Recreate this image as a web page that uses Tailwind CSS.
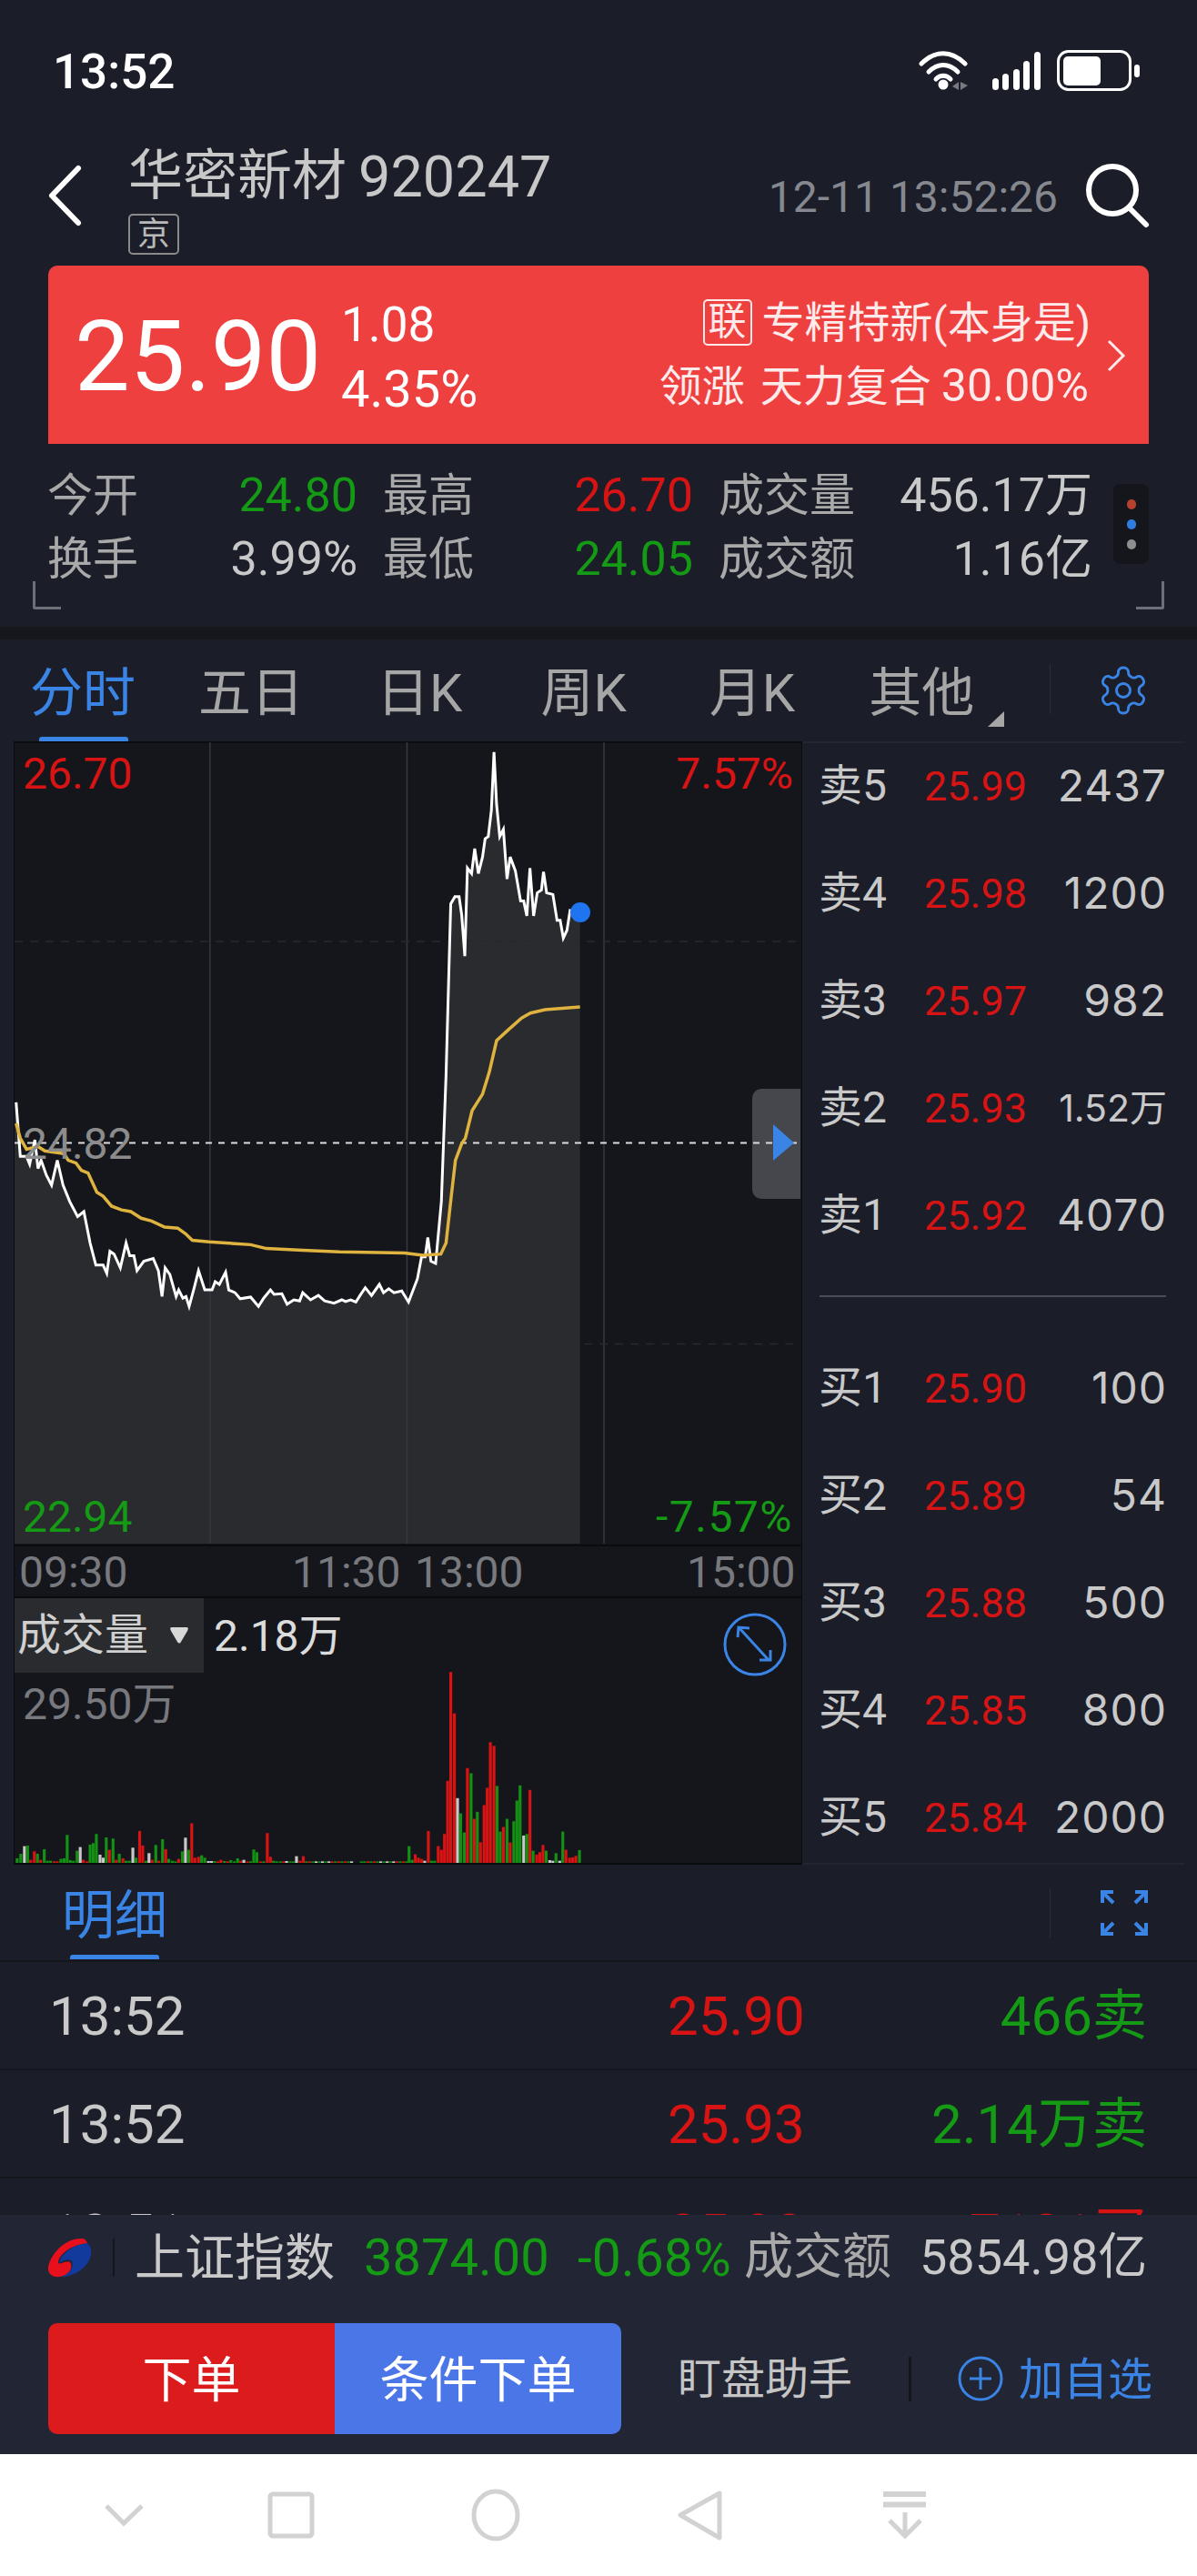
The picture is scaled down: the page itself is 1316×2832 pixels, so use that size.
<!DOCTYPE html>
<html lang="zh-CN">
<head>
  <meta charset="UTF-8" />
  <title>华密新材 920247</title>
  <script src="https://cdn.jsdelivr.net/npm/@tailwindcss/browser@4"></script>
</head>
<body class="bg-[#1b1e29] [font-family:Roboto,'Noto_Sans_CJK_SC',sans-serif]">
<div class="w-[1316px] h-[2832px] flex flex-col overflow-hidden text-[#c9c9c9]">

  <!-- status bar -->
  <div class="h-[130px] shrink-0 relative">
    <span class="absolute left-[58px] top-[49px] text-[53px] leading-[60px] font-medium text-white">13:52</span>
    <svg class="absolute left-[1005px] top-[50px]" width="250" height="56" viewBox="1005 50 250 56" fill="none">
      <path d="M1013 70 C1028 55 1046 55 1061 70" stroke="#fff" stroke-width="5" stroke-linecap="round"/>
      <path d="M1021 79 C1031 69 1043 69 1053 79" stroke="#fff" stroke-width="5" stroke-linecap="round"/>
      <path d="M1029 87 C1033 82 1041 82 1045 87" stroke="#fff" stroke-width="5" stroke-linecap="round"/>
      <circle cx="1037" cy="93" r="5.5" fill="#fff"/>
      <path d="M1054 90 L1054 99 L1047 95Z M1056 90 L1064 94 L1056 99Z" fill="#77797e"/>
      <rect x="1091" y="86" width="7" height="13" rx="3.5" fill="#fff"/>
      <rect x="1102" y="81" width="7" height="18" rx="3.5" fill="#fff"/>
      <rect x="1114" y="76" width="7" height="23" rx="3.5" fill="#fff"/>
      <rect x="1125" y="67" width="7" height="32" rx="3.5" fill="#fff"/>
      <rect x="1137" y="57" width="7" height="42" rx="3.5" fill="#fff"/>
      <rect x="1163.5" y="56.5" width="79" height="42" rx="11" stroke="#fff" stroke-width="3"/>
      <rect x="1169" y="62" width="41" height="32" rx="5" fill="#fff"/>
      <rect x="1247" y="71" width="6" height="14" rx="3" fill="#fff"/>
    </svg>
  </div>

  <!-- header -->
  <div class="h-[162px] shrink-0 relative">
    <svg class="absolute left-[50px] top-[50px]" width="42" height="70" viewBox="0 0 42 70" fill="none"><path d="M36 5 L7 35 L36 65" stroke="#fff" stroke-width="6" stroke-linecap="round" stroke-linejoin="round"/></svg>
    <div class="pl-[141px] pt-[34px]">
      <div class="flex items-center h-[60px] text-[#c8c8c8]"><span class="text-[60px] leading-none">华密新材</span><span class="ml-[13px] text-[63px] leading-none">920247</span></div>
      <div class="mt-[11px] w-[56px] h-[45px] border-2 border-[#8a8a8a] rounded-[5px] flex items-center justify-center text-[36px] leading-none text-[#b8b8b8]">京</div>
    </div>
    <span class="absolute right-[153px] top-[63px] text-[48px] leading-[48px] text-[#85888e]">12-11 13:52:26</span>
    <svg class="absolute left-[1190px] top-[46px]" width="76" height="76" viewBox="0 0 76 76" fill="none"><circle cx="33" cy="33" r="26" stroke="#fff" stroke-width="6"/><path d="M52 53 L70 71" stroke="#fff" stroke-width="6" stroke-linecap="round"/></svg>
  </div>

  <!-- price card -->
  <div class="mx-[53px] h-[196px] shrink-0 bg-[#ef4040] rounded-t-[10px] relative text-white">
    <span class="absolute left-[29px] top-[46px] text-[108px] leading-[108px]">25.90</span>
    <span class="absolute left-[322px] top-[39px] text-[53px] leading-[53px]">1.08</span>
    <span class="absolute left-[322px] top-[108px] text-[56px] leading-[56px]">4.35%</span>
    <div class="absolute right-[64px] top-[36px] flex items-center h-[52px] text-[#fdeaea]">
      <span class="w-[54px] h-[51px] border-2 border-[#fdeaea] rounded-[5px] flex items-center justify-center text-[42px] leading-none">联</span>
      <span class="ml-[11px] text-[47px] leading-none">专精特新(本身是)</span>
    </div>
    <div class="absolute right-[66px] top-[107px] flex items-center h-[50px] text-[#fdeaea] text-[47px] leading-none">
      <span>领涨</span><span class="ml-[17px]">天力复合</span><span class="ml-[11px] text-[50px]">30.00%</span>
    </div>
    <svg class="absolute left-[1163px] top-[80px]" width="24" height="38" viewBox="0 0 24 38" fill="none"><path d="M3 3 L19 19 L3 35" stroke="#fdeaea" stroke-width="3"/></svg>
  </div>

  <!-- quote stats -->
  <div class="h-[201px] shrink-0 relative pt-[22px] pl-[52px]">
    <div class="flex h-[70px] items-center leading-none">
      <div class="w-[341px] flex justify-between items-center"><span class="text-[50px] text-[#a9a9a9]">今开</span><span class="text-[52px] text-[#149a14]">24.80</span></div>
      <div class="ml-[28px] w-[341px] flex justify-between items-center"><span class="text-[50px] text-[#a9a9a9]">最高</span><span class="text-[52px] text-[#d81313]">26.70</span></div>
      <div class="ml-[28px] w-[411px] flex justify-between items-center"><span class="text-[50px] text-[#a9a9a9]">成交量</span><span class="text-[52px] text-[#c9c9c9]">456.17万</span></div>
    </div>
    <div class="flex h-[70px] items-center leading-none">
      <div class="w-[341px] flex justify-between items-center"><span class="text-[50px] text-[#a9a9a9]">换手</span><span class="text-[52px] text-[#c9c9c9]">3.99%</span></div>
      <div class="ml-[28px] w-[341px] flex justify-between items-center"><span class="text-[50px] text-[#a9a9a9]">最低</span><span class="text-[52px] text-[#149a14]">24.05</span></div>
      <div class="ml-[28px] w-[411px] flex justify-between items-center"><span class="text-[50px] text-[#a9a9a9]">成交额</span><span class="text-[52px] text-[#c9c9c9]">1.16亿</span></div>
    </div>
    <div class="absolute left-[1224px] top-[44px] w-[39px] h-[88px] rounded-[8px] bg-[#14161b] flex flex-col items-center justify-center gap-[11px]">
      <span class="w-[10px] h-[11px] rounded-full bg-[#b8402f]"></span>
      <span class="w-[10px] h-[11px] rounded-full bg-[#2f7de1]"></span>
      <span class="w-[10px] h-[11px] rounded-full bg-[#8f8f8f]"></span>
    </div>
    <span class="absolute left-[36px] top-[151px] w-[31px] h-[31px] border-l-[3px] border-b-[3px] border-[#6d7077] rounded-bl-[3px]"></span>
    <span class="absolute left-[1249px] top-[151px] w-[31px] h-[31px] border-r-[3px] border-b-[3px] border-[#6d7077] rounded-br-[3px]"></span>
  </div>
  <div class="h-[14px] shrink-0 bg-[#15171c]"></div>

  <!-- period tabs -->
  <div class="h-[112px] shrink-0 relative flex items-center pl-[33px] pt-[5px] text-[58px] leading-none text-[#a6a6a6]">
    <span class="text-[#3a84e6]">分时</span>
    <span class="ml-[69px]">五日</span>
    <span class="ml-[80px]">日K</span>
    <span class="ml-[86px]">周K</span>
    <span class="ml-[91px]">月K</span>
    <span class="ml-[81px]">其他</span>
    <svg class="absolute left-[1086px] top-[79px]" width="18" height="17" viewBox="0 0 18 17"><path d="M18 0 V17 H0Z" fill="#a6a6a6"/></svg>
    <span class="absolute left-[1154px] top-[27px] w-px h-[55px] bg-[#2c2f39]"></span>
    <svg class="absolute left-[1203px] top-[26px]" width="64" height="60" viewBox="0 0 24 24" fill="none" stroke="#3a84e6" stroke-width="1.15"><path d="M12.22 2h-.44a2 2 0 0 0-2 2v.18a2 2 0 0 1-1 1.73l-.43.25a2 2 0 0 1-2 0l-.15-.08a2 2 0 0 0-2.73.73l-.22.38a2 2 0 0 0 .73 2.73l.15.1a2 2 0 0 1 1 1.72v.51a2 2 0 0 1-1 1.74l-.15.09a2 2 0 0 0-.73 2.73l.22.38a2 2 0 0 0 2.73.73l.15-.08a2 2 0 0 1 2 0l.43.25a2 2 0 0 1 1 1.73V20a2 2 0 0 0 2 2h.44a2 2 0 0 0 2-2v-.18a2 2 0 0 1 1-1.73l.43-.25a2 2 0 0 1 2 0l.15.08a2 2 0 0 0 2.73-.73l.22-.39a2 2 0 0 0-.73-2.73l-.15-.08a2 2 0 0 1-1-1.74v-.5a2 2 0 0 1 1-1.74l.15-.09a2 2 0 0 0 .73-2.73l-.22-.38a2 2 0 0 0-2.73-.73l-.15.08a2 2 0 0 1-2 0l-.43-.25a2 2 0 0 1-1-1.73V4a2 2 0 0 0-2-2z"/><circle cx="12" cy="12" r="3"/></svg>
    <span class="absolute left-[43px] top-[107px] w-[98px] h-[5px] rounded-t-[3px] bg-[#3a84e6]"></span>
  </div>

  <!-- chart + order book -->
  <div class="h-[1235px] shrink-0 flex">
    <div class="ml-[15px] w-[867px] shrink-0 flex flex-col border-x-[1.5px] border-y-2 border-[#0b0c10] bg-[#15161b] h-[1235px]">
      <div class="relative h-[883px] shrink-0 border-b-2 border-[#0b0c10]">
        <svg id="priceChart" class="absolute left-0 top-[-1px]" width="864" height="881" viewBox="0 0 864 881">
          <svg x="0" y="0" width="864" height="881" viewBox="27 27 1508 1453" preserveAspectRatio="none">
            <polygon id="area" fill="#2a2b2f"></polygon>
            <path d="M402 27 V1480 M780 27 V1480 M1158 27 V1480" stroke="#363842" stroke-width="1.5" vector-effect="non-scaling-stroke"/>
            <path d="M27 388 H1530 M1120 1118 H1530" stroke="#272932" stroke-width="1.5" stroke-dasharray="9 8" vector-effect="non-scaling-stroke"/>
          </svg>
          <path d="M821 381 H865 V502 H821 A10 10 0 0 1 811 492 V391 A10 10 0 0 1 821 381Z" fill="#46474c"/>
          <path d="M0 440.5 H860" stroke="#dcdcdc" stroke-width="2" stroke-dasharray="7 7"/>
          <path d="M834 420 L857 440.5 L834 460Z" fill="#3a84e6"/>
          <svg x="0" y="0" width="864" height="881" viewBox="27 27 1508 1453" preserveAspectRatio="none">
            <polyline id="whiteLine" fill="none" stroke="#fff" stroke-width="3" stroke-linejoin="miter" vector-effect="non-scaling-stroke"></polyline>
            <polyline id="avgLine" fill="none" stroke="#dfb33f" stroke-width="3.5" vector-effect="non-scaling-stroke"></polyline>
          </svg>
          <circle cx="622" cy="187" r="11" fill="#1f74f0"/>
        </svg>
        <span class="absolute left-[9px] top-[10px] text-[48px] leading-[48px] text-[#d81313]">26.70</span>
        <span class="absolute right-[9px] top-[10px] text-[48px] leading-[48px] text-[#d81313]">7.57%</span>
        <span class="absolute left-[9px] top-[417px] text-[48px] leading-[48px] text-[#8c8c8c]">24.82</span>
        <span class="absolute left-[9px] top-[827px] text-[48px] leading-[48px] text-[#149a14]">22.94</span>
        <span class="absolute right-[9px] top-[827px] text-[48px] leading-[48px] text-[#149a14] tracking-[1.5px]">-7.57%</span>
      </div>
      <div class="relative h-[57px] shrink-0 border-b-2 border-[#0b0c10] text-[48px] leading-[48px] text-[#77797e]">
        <span class="absolute left-[5px] top-[5px]">09:30</span>
        <span class="absolute left-[305px] top-[5px]">11:30</span>
        <span class="absolute left-[440px] top-[5px]">13:00</span>
        <span class="absolute left-[739px] top-[5px]">15:00</span>
      </div>
      <div class="relative flex-1">
        <svg class="absolute left-0 bottom-0" width="864" height="293" viewBox="27 48 1508 877" preserveAspectRatio="none"><g id="volBars"></g></svg>
        <div class="absolute left-0 top-0 w-[208px] h-[82px] bg-[#2a2b2f] flex items-center pl-[3px] text-[48px] leading-none text-[#d0d0d0]">
          成交量
          <svg class="ml-[23px]" width="22" height="18" viewBox="0 0 22 18"><path d="M3 0 H19 Q22 0 20 4 L13 16 Q11 19 9 16 L2 4 Q0 0 3 0Z" fill="#d8d8d8"/></svg>
        </div>
        <span class="absolute left-[219px] top-[18px] text-[48px] leading-[48px] text-[#dcdcdc]">2.18万</span>
        <span class="absolute left-[9px] top-[93px] text-[48px] leading-[48px] text-[#77797e]">29.50万</span>
        <svg class="absolute left-[779px] top-[16px]" width="70" height="70" viewBox="0 0 70 70" fill="none" stroke="#3a84e6" stroke-width="3"><circle cx="35" cy="35" r="33"/><path d="M18 17 L50 52 M16 27 L17 16 L29 17 M40 52 L52 52 L52 41"/></svg>
      </div>
    </div>

    <div class="relative w-[434px] shrink-0 text-[#c9c9c9]">
      <div class="absolute left-0 top-0 w-[420px] h-[2px] bg-[#232630]"></div>
      <div class="absolute left-0 bottom-0 w-[420px] h-[2px] bg-[#232630]"></div>
      <div class="pl-[18px] pr-[33px]">
        <div class="h-[118px] mt-[-10px] flex items-center"><span class="w-[116px] text-[48px] leading-none">卖5</span><span class="text-[45px] leading-none text-[#d81313]">25.99</span><span class="ml-auto [font-family:Inter,sans-serif] text-[48px] tracking-[1px] leading-none">2437</span></div>
        <div class="h-[118px] flex items-center"><span class="w-[116px] text-[48px] leading-none">卖4</span><span class="text-[45px] leading-none text-[#d81313]">25.98</span><span class="ml-auto [font-family:Inter,sans-serif] text-[48px] tracking-[1px] leading-none">1200</span></div>
        <div class="h-[118px] flex items-center"><span class="w-[116px] text-[48px] leading-none">卖3</span><span class="text-[45px] leading-none text-[#d81313]">25.97</span><span class="ml-auto [font-family:Inter,sans-serif] text-[48px] tracking-[1px] leading-none">982</span></div>
        <div class="h-[118px] flex items-center"><span class="w-[116px] text-[48px] leading-none">卖2</span><span class="text-[45px] leading-none text-[#d81313]">25.93</span><span class="ml-auto [font-family:Inter,'Noto_Sans_CJK_SC',sans-serif] text-[41px] leading-none">1.52万</span></div>
        <div class="h-[118px] flex items-center"><span class="w-[116px] text-[48px] leading-none">卖1</span><span class="text-[45px] leading-none text-[#d81313]">25.92</span><span class="ml-auto [font-family:Inter,sans-serif] text-[48px] tracking-[1px] leading-none">4070</span></div>
        <div class="h-[2px] mt-[29px] ml-[1px] mr-[1px] bg-[#4a4d57]"></div>
        <div class="h-[118px] mt-[41px] flex items-center"><span class="w-[116px] text-[48px] leading-none">买1</span><span class="text-[45px] leading-none text-[#d81313]">25.90</span><span class="ml-auto [font-family:Inter,sans-serif] text-[48px] tracking-[1px] leading-none">100</span></div>
        <div class="h-[118px] flex items-center"><span class="w-[116px] text-[48px] leading-none">买2</span><span class="text-[45px] leading-none text-[#d81313]">25.89</span><span class="ml-auto [font-family:Inter,sans-serif] text-[48px] tracking-[1px] leading-none">54</span></div>
        <div class="h-[118px] flex items-center"><span class="w-[116px] text-[48px] leading-none">买3</span><span class="text-[45px] leading-none text-[#d81313]">25.88</span><span class="ml-auto [font-family:Inter,sans-serif] text-[48px] tracking-[1px] leading-none">500</span></div>
        <div class="h-[118px] flex items-center"><span class="w-[116px] text-[48px] leading-none">买4</span><span class="text-[45px] leading-none text-[#d81313]">25.85</span><span class="ml-auto [font-family:Inter,sans-serif] text-[48px] tracking-[1px] leading-none">800</span></div>
        <div class="h-[118px] flex items-center"><span class="w-[116px] text-[48px] leading-none">买5</span><span class="text-[45px] leading-none text-[#d81313]">25.84</span><span class="ml-auto [font-family:Inter,sans-serif] text-[48px] tracking-[1px] leading-none">2000</span></div>
      </div>
    </div>
  </div>

  <!-- tick detail -->
  <div class="h-[107px] shrink-0 relative border-b-2 border-[#15171c]">
    <span class="absolute left-[68px] top-[27px] text-[58px] leading-[58px] text-[#3a84e6]">明细</span>
    <span class="absolute left-[77px] top-[99px] w-[98px] h-[5px] rounded-t-[3px] bg-[#3a84e6]"></span>
    <span class="absolute left-[1154px] top-[26px] w-px h-[54px] bg-[#2c2f39]"></span>
    <svg class="absolute left-[1209px] top-[27px]" width="54" height="52" viewBox="0 0 54 52" fill="none" stroke="#3a84e6" stroke-width="4"><path d="M3 15 V3 H15 M3 3 L15 15 M51 15 V3 H39 M51 3 L39 15 M3 37 V49 H15 M3 49 L15 37 M51 37 V49 H39 M51 49 L39 37"/></svg>
  </div>
  <div class="flex-1 overflow-hidden text-[60px] leading-none">
    <div class="h-[119px] flex items-center pl-[54px] pr-[55px] pt-[3px] border-b-2 border-[#15171c]"><span class="w-[680px] text-[#c9c9c9]">13:52</span><span class="text-[#d81313]">25.90</span><span class="ml-auto text-[#149a14]">466卖</span></div>
    <div class="h-[119px] flex items-center pl-[54px] pr-[55px] pt-[3px] border-b-2 border-[#15171c]"><span class="w-[680px] text-[#c9c9c9]">13:52</span><span class="text-[#d81313]">25.93</span><span class="ml-auto text-[#149a14]">2.14万卖</span></div>
    <div class="h-[119px] flex items-center pl-[54px] pr-[55px] pt-[3px]"><span class="w-[680px] text-[#c9c9c9]">13:51</span><span class="text-[#d81313]">25.93</span><span class="ml-auto text-[#d81313]">7131买</span></div>
  </div>

  <!-- ticker + actions -->
  <div class="h-[263px] shrink-0 bg-[#222533]">
    <div class="h-[94px] flex items-center leading-none">
      <svg class="ml-[52px] shrink-0" width="50" height="44" viewBox="0 0 50 44">
        <path d="M44 6 C49 10 50 18 45 27 C39 36 28 43 15 43 C24 40 30 33 27 26 C24 22 16 26 13 28 C15 17 30 7 44 6Z" fill="#123a9c"/>
        <path d="M38 1 C22 0 5 15 1 32 C0 40 6 44 14 43 C24 41 29 33 25 27 C20 25 14 30 12 28 C12 20 24 8 44 6 C43 3 41 1 38 1Z" fill="#e8101c"/>
      </svg>
      <span class="ml-[22px] w-[2px] h-[42px] bg-[#14161d] shrink-0"></span>
      <span class="ml-[22px] w-[252px] shrink-0 text-[55px] text-[#c9c9c9]">上证指数</span>
      <span class="w-[235px] shrink-0 text-[56px] text-[#149a14]">3874.00</span>
      <span class="w-[183px] shrink-0 text-[57px] text-[#149a14]">-0.68%</span>
      <span class="w-[193px] shrink-0 text-[54px] text-[#a9a9a9]">成交额</span>
      <span class="text-[54px] text-[#c9c9c9]">5854.98亿</span>
    </div>
    <div class="pt-[25px] pl-[53px] flex items-center">
      <button class="w-[315px] h-[122px] pt-[5px] bg-[#dc1c1c] rounded-l-[10px] text-white text-[54px] leading-none">下单</button>
      <button class="w-[315px] h-[122px] pt-[5px] bg-[#4b76e8] rounded-r-[10px] text-white text-[54px] leading-none">条件下单</button>
      <span class="ml-[62px] pt-[2px] w-[254px] shrink-0 text-[48px] leading-none text-[#c5c5c5]">盯盘助手</span>
      <span class="w-[3px] h-[49px] bg-[#14161d] shrink-0"></span>
      <svg class="ml-[51px] shrink-0" width="50" height="50" viewBox="0 0 50 50" fill="none" stroke="#3a84e6" stroke-width="3"><circle cx="25" cy="25" r="23"/><path d="M25 13 V37 M13 25 H37"/></svg>
      <span class="ml-[17px] pt-[2px] text-[49px] leading-none text-[#3a84e6]">加自选</span>
    </div>
  </div>

  <!-- android nav -->
  <div class="h-[134px] shrink-0 bg-white">
    <svg width="1316" height="134" viewBox="0 2698 1316 134" fill="none" stroke="#d2d2d2" stroke-width="5">
      <path d="M117 2755 L136 2774 L156 2755"/>
      <rect x="297" y="2742" width="46" height="46" rx="3"/>
      <ellipse cx="545" cy="2765" rx="24" ry="26"/>
      <path d="M791 2741 L748 2765 L791 2790 Z" stroke-linejoin="round"/>
      <path d="M971 2742 H1018 M971 2753.5 H1018" stroke-width="6"/>
      <path d="M995 2762 V2788 M978 2771 L995 2788 L1012 2771"/>
    </svg>
  </div>
</div>

<script>
  const white = [[30,680],[38,778],[50,778],[56,792],[66,748],[72,800],[78,785],[88,812],[98,830],[109,785],[120,830],[133,860],[148,887],[160,878],[172,935],[183,975],[197,975],[204,990],[210,950],[218,955],[230,980],[241,935],[248,958],[256,958],[262,985],[275,968],[293,963],[303,985],[310,1032],[316,980],[325,992],[337,1032],[342,1020],[350,1035],[356,1032],[362,1050],[372,1015],[380,985],[392,1020],[406,1020],[412,1005],[420,1010],[432,988],[438,1020],[450,1025],[460,1036],[480,1033],[495,1050],[505,1035],[518,1020],[525,1028],[540,1027],[550,1046],[563,1038],[574,1040],[580,1025],[595,1038],[610,1030],[622,1040],[640,1044],[655,1038],[662,1041],[672,1038],[682,1042],[690,1030],[700,1016],[712,1030],[727,1010],[735,1025],[745,1018],[755,1025],[770,1022],[783,1042],[800,1000],[808,960],[815,960],[820,925],[826,968],[835,972],[846,860],[855,630],[864,320],[872,307],[880,307],[885,340],[891,415],[896,255],[904,265],[910,220],[917,265],[925,235],[930,202],[936,198],[942,150],[947,45],[952,140],[958,198],[965,185],[972,275],[978,235],[988,260],[998,315],[1004,315],[1010,342],[1016,255],[1023,342],[1030,300],[1038,295],[1042,262],[1048,300],[1060,303],[1068,350],[1074,350],[1080,382],[1087,368],[1093,332],[1112,335]];
  const avg = [[30,718],[38,745],[50,765],[72,760],[85,768],[122,773],[130,785],[145,790],[155,803],[168,808],[185,843],[197,850],[213,868],[232,875],[250,878],[270,890],[290,895],[315,906],[340,908],[355,918],[368,930],[400,933],[450,936],[480,938],[510,945],[580,948],[650,951],[775,953],[810,957],[845,955],[855,935],[865,850],[873,785],[885,755],[892,745],[905,695],[925,665],[938,625],[952,568],[975,548],[1000,527],[1017,518],[1045,512],[1112,507]];
  const pts = (a) => a.map((p) => p.join(",")).join(" ");
  document.getElementById("whiteLine").setAttribute("points", pts(white));
  document.getElementById("avgLine").setAttribute("points", pts(avg));
  document.getElementById("area").setAttribute("points", pts([[27,680], ...white, [1112,1480], [27,1480]]));

  // volume bars: [x, top, colour]
  const r = "#d81313", g = "#149014", w = "#c8c8c8";
  const bars = [[32,910,g],[39,895,g],[46,870,w],[52,868,g],[58,915,r],[65,887,r],[71,895,g],[77,915,r],[84,880,g],[90,918,g],[96,918,g],[103,920,r],[109,920,r],[116,912,g],[122,910,g],[128,833,g],[134,916,g],[140,918,g],[147,885,g],[153,873,w],[159,915,r],[166,920,r],[172,865,g],[178,860,g],[184,830,g],[191,898,w],[197,908,w],[203,841,g],[209,882,r],[216,845,g],[222,915,r],[228,895,g],[235,910,r],[241,918,g],[247,918,g],[254,875,w],[260,908,g],[267,820,r],[273,868,r],[279,918,g],[285,893,w],[291,915,r],[298,866,g],[304,918,r],[311,847,g],[317,880,r],[323,912,g],[330,918,g],[336,920,g],[342,912,r],[349,887,g],[355,842,w],[361,882,g],[367,795,r],[373,908,r],[380,905,r],[386,900,g],[392,908,g],[399,919,w],[405,919,w],[411,919,g],[417,920,r],[423,915,r],[430,919,g],[436,920,r],[442,916,g],[449,920,g],[455,910,g],[461,918,r],[467,915,w],[474,920,r],[480,920,g],[486,881,g],[492,890,g],[499,920,r],[505,920,g],[512,827,r],[518,905,r],[524,918,g],[530,920,g],[537,920,g],[543,920,r],[549,919,w],[556,920,g],[562,920,g],[568,903,w],[575,918,r],[581,903,r],[784,870,g],[790,915,g],[796,897,r],[802,908,r],[808,912,r],[814,918,w],[821,820,r],[827,918,g],[833,918,g],[840,870,r],[846,882,r],[852,830,r],[858,655,r],[864,297,r],[871,433,r],[877,712,w],[883,762,g],[890,825,g],[896,613,r],[903,630,g],[909,780,r],[915,757,g],[921,857,r],[928,735,r],[934,678,r],[940,528,r],[947,540,r],[953,672,g],[959,822,g],[965,807,r],[972,780,g],[978,858,r],[985,788,g],[991,720,g],[997,670,g],[1004,835,w],[1010,830,g],[1016,685,r],[1022,885,g],[1029,898,r],[1035,890,r],[1041,866,r],[1047,885,g],[1054,916,w],[1060,918,w],[1066,893,g],[1073,918,w],[1079,822,g],[1085,882,r],[1092,908,r],[1098,907,r],[1104,902,r],[1111,883,g]];
  // flat midday stretch, all tiny bars
  for (let x = 587; x < 780; x += 6.2) {
    if (x > 678 && x < 688) continue;
    bars.push([x, 920, [g, r, w, g][Math.round(x) % 4]]);
  }
  const volBars = document.getElementById("volBars");
  bars.forEach(([x, top, c]) => {
    const rect = document.createElementNS("http://www.w3.org/2000/svg", "rect");
    rect.setAttribute("x", x - 2.8);
    rect.setAttribute("y", top);
    rect.setAttribute("width", 5.6);
    rect.setAttribute("height", 925 - top);
    rect.setAttribute("fill", c);
    volBars.appendChild(rect);
  });
</script>
</body>
</html>
